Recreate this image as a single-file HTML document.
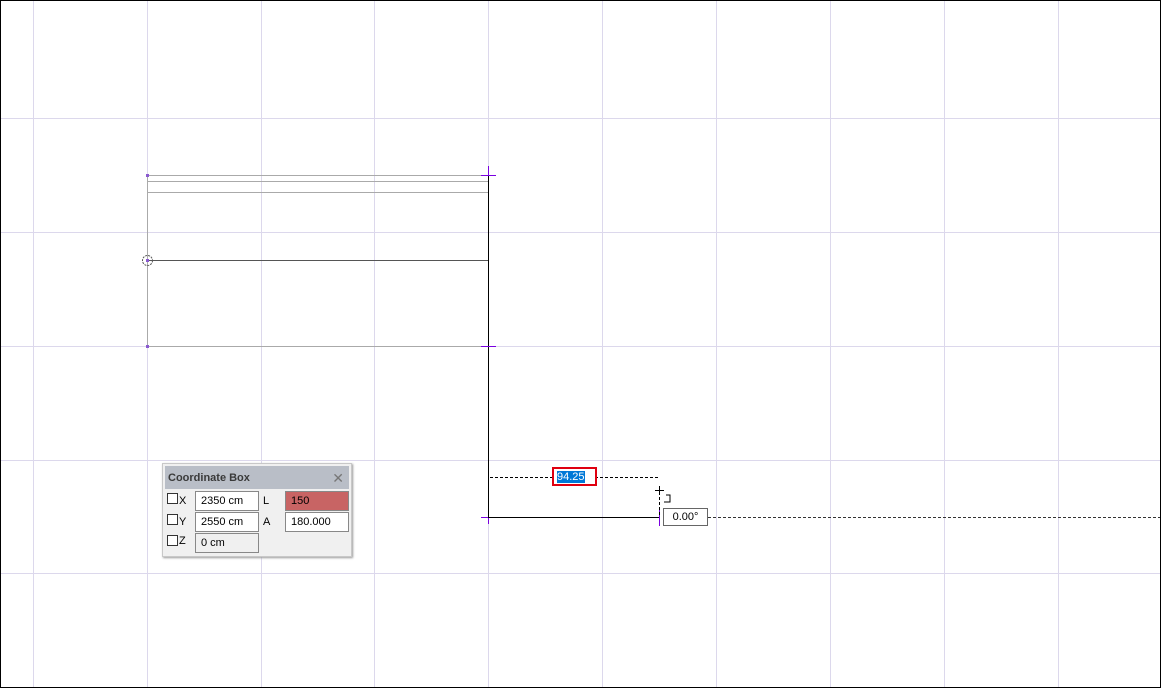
<!DOCTYPE html>
<html><head><style>
*{margin:0;padding:0;box-sizing:border-box}
body{width:1161px;height:688px;overflow:hidden;background:#fff;font-family:"Liberation Sans",sans-serif;position:relative}
.cb{position:absolute;left:162px;top:463px;width:190px;height:94px;background:#f0f0f0;border:1px solid #c8c8c8;box-shadow:1px 1px 2px #999}
.hd{position:absolute;left:2px;top:2px;width:184px;height:23px;background:#b9bec7;font-size:11px;font-weight:bold;color:#3a3a3a;line-height:24px;padding-left:3px}
.x{position:absolute;right:5px;top:0;color:#777;font-weight:normal;font-size:14px}
.ck{position:absolute;width:11px;height:11px;border:1px solid #333;background:#fff}
.lb{position:absolute;font-size:11px;color:#000}
.in{position:absolute;height:20px;border:1px solid #888;background:#fff;font-size:11px;line-height:18px;padding-left:5px}
</style></head><body>
<svg width="1161" height="688" style="position:absolute;left:0;top:0">
<g stroke="#dcd8ec" stroke-width="1">
<line x1="33.5" y1="0" x2="33.5" y2="688"/><line x1="147.5" y1="0" x2="147.5" y2="688"/><line x1="261.5" y1="0" x2="261.5" y2="688"/><line x1="374.5" y1="0" x2="374.5" y2="688"/><line x1="488.5" y1="0" x2="488.5" y2="688"/><line x1="602.5" y1="0" x2="602.5" y2="688"/><line x1="716.5" y1="0" x2="716.5" y2="688"/><line x1="830.5" y1="0" x2="830.5" y2="688"/><line x1="944.5" y1="0" x2="944.5" y2="688"/><line x1="1058.5" y1="0" x2="1058.5" y2="688"/>
<line x1="0" y1="118.5" x2="1161" y2="118.5"/><line x1="0" y1="232.5" x2="1161" y2="232.5"/><line x1="0" y1="346.5" x2="1161" y2="346.5"/><line x1="0" y1="460.5" x2="1161" y2="460.5"/><line x1="0" y1="573.5" x2="1161" y2="573.5"/>
</g>
<g stroke="#aaa" fill="none">
<rect x="147.5" y="175.5" width="341" height="171"/>
<line x1="147" y1="181.5" x2="488" y2="181.5"/><line x1="147" y1="192.5" x2="488" y2="192.5"/>
</g>
<line x1="147" y1="260.5" x2="488" y2="260.5" stroke="#555"/>
<circle cx="147.5" cy="260.5" r="5" stroke="#555" fill="none" stroke-dasharray="2 1"/>
<g fill="#8a5ad0"><rect x="146" y="174" width="3" height="3"/><rect x="146" y="259" width="3" height="3"/><rect x="146" y="345" width="3" height="3"/></g>
<line x1="488.5" y1="170" x2="488.5" y2="523" stroke="#000"/>
<g stroke="#7a00e0"><line x1="488.5" y1="166" x2="488.5" y2="176"/><line x1="481" y1="175.5" x2="496" y2="175.5"/><line x1="481" y1="346.5" x2="496" y2="346.5"/><line x1="481" y1="517.5" x2="489" y2="517.5"/><line x1="488.5" y1="517" x2="488.5" y2="524"/><line x1="659.5" y1="510" x2="659.5" y2="526"/></g>
<line x1="488" y1="517.5" x2="659" y2="517.5" stroke="#000"/>
<line x1="490" y1="477.5" x2="658" y2="477.5" stroke="#000" stroke-dasharray="3 2"/>
<line x1="659.5" y1="492" x2="659.5" y2="517" stroke="#000" stroke-dasharray="3 2"/>
<line x1="708" y1="517.5" x2="1161" y2="517.5" stroke="#333" stroke-dasharray="3 2"/>
<g stroke="#000"><line x1="655" y1="490.5" x2="664" y2="490.5"/><line x1="659.5" y1="486" x2="659.5" y2="495"/><path d="M666 495h4v7h-6" fill="none"/></g>
<rect x="0.5" y="0.5" width="1160" height="687" fill="none" stroke="#000"/>
</svg>
<div style="position:absolute;left:552px;top:467px;width:45px;height:19px;border:2px solid #e00010;background:#fff"><span style="position:absolute;left:3px;top:2px;background:#0078d7;color:#fff;font-size:11px;line-height:12px">94.25</span></div>
<div style="position:absolute;left:663px;top:508px;width:45px;height:18px;border:1px solid #666;background:#fff;font-size:11px;line-height:16px;text-align:center">0.00°</div>
<div class="cb">
<div class="hd">Coordinate Box<span class="x">✕</span></div>
<div class="ck" style="left:4px;top:29px"></div><div class="lb" style="left:16px;top:31px">X</div>
<div class="in" style="left:32px;top:27px;width:64px">2350 cm</div>
<div class="lb" style="left:100px;top:31px">L</div>
<div class="in" style="left:122px;top:27px;width:64px;background:#c86464">150</div>
<div class="ck" style="left:4px;top:50px"></div><div class="lb" style="left:16px;top:52px">Y</div>
<div class="in" style="left:32px;top:48px;width:64px">2550 cm</div>
<div class="lb" style="left:100px;top:52px">A</div>
<div class="in" style="left:122px;top:48px;width:64px">180.000</div>
<div class="ck" style="left:4px;top:71px"></div><div class="lb" style="left:16px;top:71px">Z</div>
<div class="in" style="left:32px;top:69px;width:64px;background:#f0f0f0">0 cm</div>
</div>
</body></html>
